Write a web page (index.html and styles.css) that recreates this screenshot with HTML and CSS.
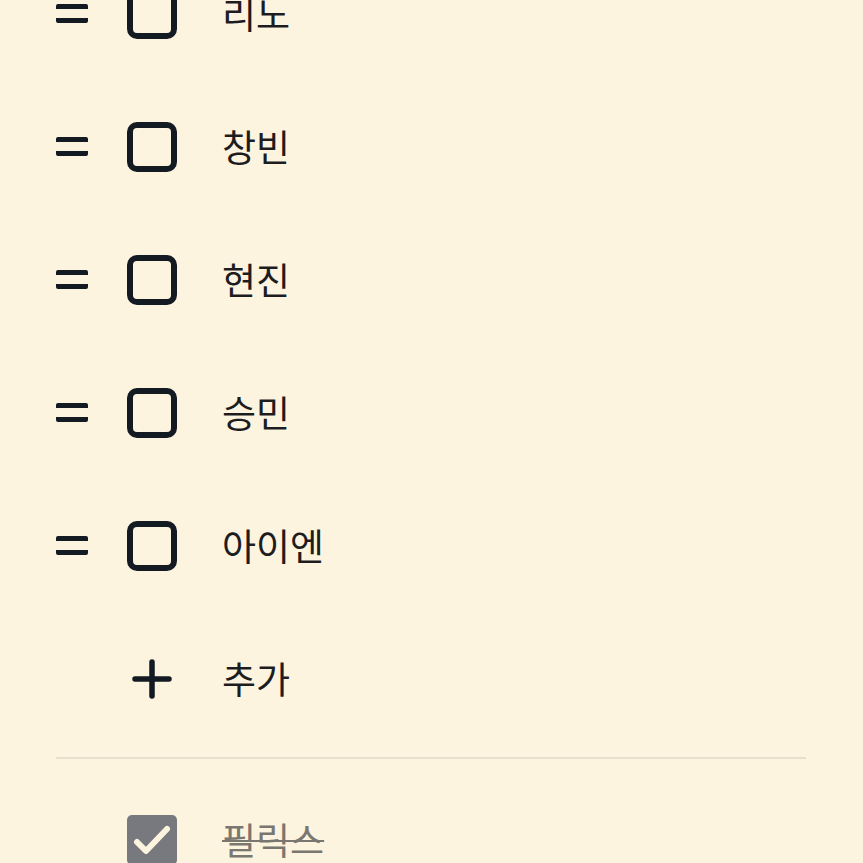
FILE: index.html
```html
<!DOCTYPE html>
<html lang="ko">

<head>
    <meta charset="UTF-8">
    <meta name="viewport" content="width=device-width, initial-scale=1">
    <title>체크리스트</title>
    <link rel="stylesheet" href="styles.css">
</head>

<body>
    <div class="list">
        <div class="row">
            <span class="handle"></span>
            <span class="box"></span>
            <span class="label">리노</span>
        </div>
        <div class="row">
            <span class="handle"></span>
            <span class="box"></span>
            <span class="label">창빈</span>
        </div>
        <div class="row">
            <span class="handle"></span>
            <span class="box"></span>
            <span class="label">현진</span>
        </div>
        <div class="row">
            <span class="handle"></span>
            <span class="box"></span>
            <span class="label">승민</span>
        </div>
        <div class="row">
            <span class="handle"></span>
            <span class="box"></span>
            <span class="label">아이엔</span>
        </div>

        <!-- 항목 추가 -->
        <div class="row">
            <span class="handle blank"></span>
            <span class="plus">
                <svg width="40" height="40" viewBox="0 0 40 40">
                    <path d="M20 3v34M3 20h34" stroke="#131a22" stroke-width="5.5" stroke-linecap="round" fill="none"/>
                </svg>
            </span>
            <span class="label">추가</span>
        </div>
    </div>

    <hr class="divider">

    <div class="list">
        <div class="row done">
            <span class="handle blank"></span>
            <span class="box checked">
                <svg width="50" height="50" viewBox="0 0 50 50">
                    <path d="M10 27l9 9 21-22" stroke="#fdf4df" stroke-width="6" stroke-linecap="round" stroke-linejoin="round" fill="none"/>
                </svg>
            </span>
            <span class="label">필릭스</span>
        </div>
    </div>
</body>

</html>
```

FILE: styles.css
```css
/* 기본 */
* {
    margin: 0;
    padding: 0;
    box-sizing: border-box;
}

body {
    background-color: #fdf4df;
    font-family: "Noto Sans CJK KR", "Noto Sans", sans-serif;
    color: #1d1d1f;
    overflow: hidden;
}

.list:first-child {
    margin-top: -53px;
}

/* 행 */
.row {
    display: flex;
    align-items: center;
    height: 133px;
    padding-left: 56px;
}

.handle {
    width: 32px;
    height: 19px;
    border-top: 5px solid #131a22;
    border-bottom: 5px solid #131a22;
    border-radius: 2px;
}

.handle.blank {
    border: none;
}

.box {
    width: 50px;
    height: 50px;
    margin-left: 39px;
    border: 6px solid #131a22;
    border-radius: 10px;
}

.box.checked {
    border: none;
    border-radius: 5px;
    background-color: #78787f;
}

.box svg {
    display: block;
}

.plus {
    width: 50px;
    height: 40px;
    margin-left: 39px;
    display: flex;
    justify-content: center;
}

.label {
    margin-left: 45px;
    font-size: 37px;
    line-height: 1;
}

.done .label {
    color: #7a7670;
    text-decoration: line-through;
    text-decoration-thickness: 2px;
}

/* 구분선 */
.divider {
    border: none;
    height: 2px;
    background-color: #e8dfcc;
    margin: 12px 57px 14px 56px;
}
```
